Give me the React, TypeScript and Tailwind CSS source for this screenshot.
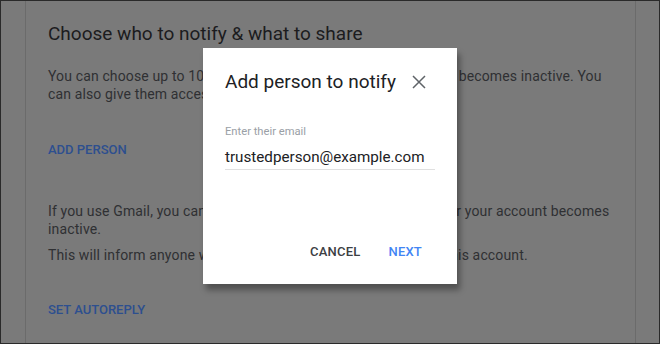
export default function App() {
  const font = { fontFamily: "Roboto, 'Liberation Sans', sans-serif" };

  return (
    <div
      className="relative w-[660px] h-[344px] overflow-hidden border border-[#2a2a2a] bg-[#7a7a7a] flex"
      style={font}
    >
      {/* page behind the dim */}
      <div className="w-[24px] shrink-0" />
      <div className="w-[611px] shrink-0 border-x border-[#6b6b6b] pl-[22px] pr-[22px] pt-[19px]">
        <h2 className="text-[19px] leading-[28px] text-[#1c1c1e]">
          Choose who to notify &amp; what to share
        </h2>
        <p className="mt-[19px] text-[14px] leading-[18px] tracking-[0.14px] text-[#2f3033]">
          You can choose up to 10 people to notify if your Google Account becomes inactive. You
          can also give them access to some of your data.
        </p>
        <div className="mt-[38px] text-[13px] leading-[18px] font-medium text-[#2d4f8f]">
          ADD PERSON
        </div>
        <p className="mt-[43px] text-[14px] leading-[18px] tracking-[0.14px] text-[#2f3033]">
          If you use Gmail, you can also set up an autoreply to be sent after your account becomes
          inactive.
        </p>
        <p className="mt-[8px] text-[14px] leading-[18px] tracking-[0.14px] text-[#2f3033]">
          This will inform anyone who emails you that you no longer use this account.
        </p>
        <div className="mt-[37px] text-[13px] leading-[18px] font-medium text-[#2d4f8f]">
          SET AUTOREPLY
        </div>
      </div>
      <div className="flex-1" />

      {/* dialog */}
      <div className="absolute left-[202px] top-[47px] w-[254px] h-[236px] bg-white shadow-[3px_6px_6px_rgba(0,0,0,0.35)] flex flex-col">
        <div className="px-[22px] pt-[20px]">
          <div className="flex items-center justify-between">
            <h3 className="text-[19px] leading-[28px] text-[#202124]">Add person to notify</h3>
            <button className="w-[24px] h-[24px] mr-[4px] flex items-center justify-center">
              <svg width="14" height="14" viewBox="0 0 14 14">
                <path d="M1 1 L13 13 M13 1 L1 13" stroke="#5f6368" strokeWidth="1.5" />
              </svg>
            </button>
          </div>
          <div className="mt-[29px] text-[11.2px] leading-[14px] text-[#9aa0a6]">Enter their email</div>
          <div className="mt-[8px] pb-[2px] border-b border-[#e0e0e0] text-[15.2px] leading-[20px] text-[#202124]">
            trustedperson@example.com
          </div>
        </div>
        <div className="mt-auto mb-[14px] pr-[22px] flex justify-end gap-[2px]">
          <button className="h-[36px] px-[13px] text-[13px] font-medium text-[#3c4043] tracking-[0.2px]">
            CANCEL
          </button>
          <button className="h-[36px] px-[13px] text-[13px] font-medium text-[#4285f4] tracking-[0.2px]">
            NEXT
          </button>
        </div>
      </div>
    </div>
  );
}
